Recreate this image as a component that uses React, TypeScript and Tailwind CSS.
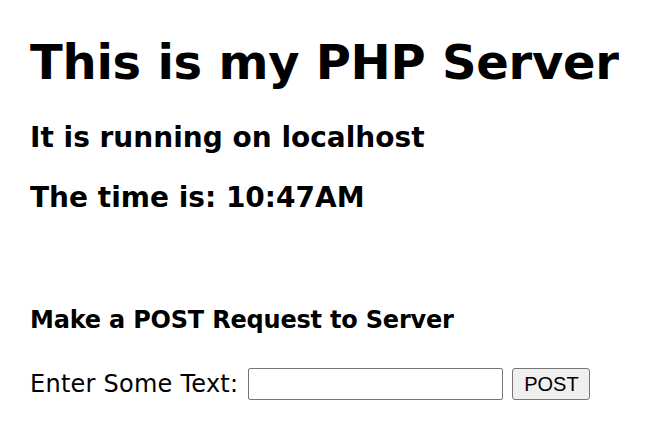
const App = () => {
  return (
    <div className="min-h-screen bg-white text-black font-['DejaVu_Sans',sans-serif] pl-[30px] pt-[34px]">
      <h1 className="text-[48px] leading-[56px] font-bold tracking-[-0.25px]">This is my PHP Server</h1>
      <h3 className="mt-[32px] text-[28px] leading-[32px] font-bold">It is running on localhost</h3>
      <h3 className="mt-[28px] text-[28px] leading-[32px] font-bold">The time is: 10:47AM</h3>
      <h4 className="mt-[92px] text-[24px] leading-[28px] font-bold tracking-[-0.2px]">Make a POST Request to Server</h4>
      <form className="mt-[34px] flex items-center h-[32px]" onSubmit={(e) => e.preventDefault()}>
        <label className="text-[24px] leading-[32px] tracking-[0.25px]">Enter Some Text:</label>
        <input
          type="text"
          className="ml-[10px] w-[255px] h-[32px] border border-[#767676] rounded-[2px] bg-white px-1"
        />
        <button
          type="submit"
          className="ml-[9px] w-[78px] h-[32px] border border-[#767676] rounded-[3px] bg-[#efefef] text-[20px] font-['Liberation_Sans',sans-serif]"
        >
          POST
        </button>
      </form>
    </div>
  );
};

export default App;
